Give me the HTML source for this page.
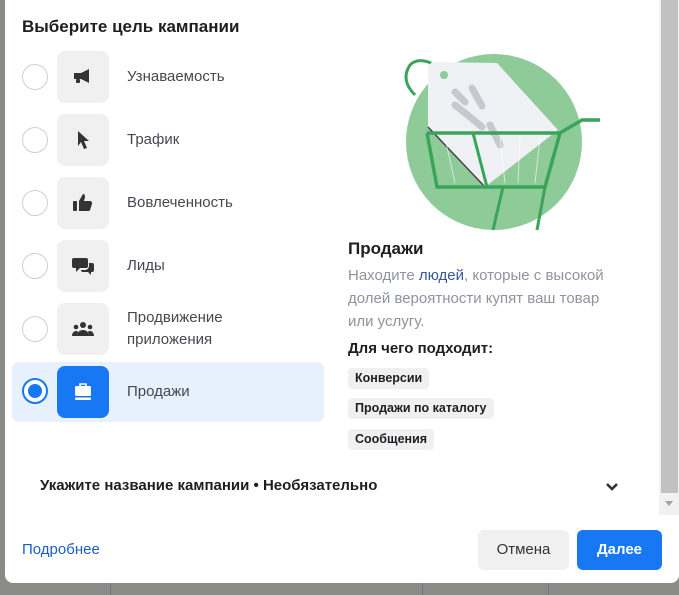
<!DOCTYPE html>
<html><head><meta charset="utf-8"><style>
*{box-sizing:border-box;margin:0;padding:0}
body{width:679px;height:595px;overflow:hidden;background:#8a8a87;font-family:"Liberation Sans",Arial,sans-serif;position:relative}
.modal{position:absolute;left:5px;top:-10px;width:674px;height:593px;background:#fff;border-radius:8px;overflow:hidden}
.abs{position:absolute}
h1{position:absolute;left:17px;top:17px;font-size:17px;font-weight:bold;color:#1c1e21}
.radio{position:absolute;left:17px;width:26px;height:26px;border:1px solid #ccd0d5;border-radius:50%;background:#fff}
.ic{position:absolute;left:52px;width:52px;height:52px;border-radius:8px;background:#f0f0f0;display:flex;align-items:center;justify-content:center}
.lb{position:absolute;left:122px;font-size:15px;color:#444950;line-height:22px}
.tag{position:absolute;left:343px;background:#f0f0f0;border-radius:4px;font-size:12.5px;font-weight:bold;color:#1c1e21;padding:3px 7px;line-height:15px}
.sb{position:absolute;left:654px;top:10px;width:20px;height:515px;background:#f1f1f1}
</style></head><body>
<div class="abs" style="left:110px;top:583px;width:1px;height:12px;background:#777"></div>
<div class="abs" style="left:422px;top:583px;width:1px;height:12px;background:#777"></div>
<div class="abs" style="left:548px;top:583px;width:1px;height:12px;background:#777"></div>
<div class="modal">
<div style="position:absolute;left:0;top:10px;width:674px;height:593px">
<h1>Выберите цель кампании</h1>
<div class="abs" style="left:7px;top:362px;width:312px;height:60px;background:#e7f0fd;border-radius:6px"></div>

<div class="radio" style="top:64px"></div>
<div class="ic" style="top:51px"><svg width="24" height="20" viewBox="0 0 24 20"><path d="M3 6h7l8-4v14l-8-4H3z" fill="#333"/><rect x="5" y="12" width="4" height="4" rx="1" fill="#333"/></svg></div>
<div class="lb" style="top:66px">Узнаваемость</div>

<div class="radio" style="top:127px"></div>
<div class="ic" style="top:114px"><svg width="18" height="22" viewBox="0 0 18 22"><path d="M4 2l11 10h-5l3 7-3 1-3-7-3 4z" fill="#333"/></svg></div>
<div class="lb" style="top:129px">Трафик</div>

<div class="radio" style="top:190px"></div>
<div class="ic" style="top:177px"><svg width="24" height="22" viewBox="0 0 24 22"><rect x="2" y="9" width="4" height="10" rx="1" fill="#333"/><path d="M8 9l4-7c2 0 2 2 2 3l-1 4h6c1.5 0 2.5 1.5 2 3l-2 6c-.4 1-1 1-2 1H8z" fill="#333"/></svg></div>
<div class="lb" style="top:192px">Вовлеченность</div>

<div class="radio" style="top:253px"></div>
<div class="ic" style="top:240px"><svg width="24" height="22" viewBox="0 0 24 22"><path d="M3 3h12a2 2 0 012 2v6a2 2 0 01-2 2H9l-4 4v-4H3a2 2 0 01-2-2V5a2 2 0 012-2z" fill="#333"/><path d="M18 8h3a2 2 0 012 2v5a2 2 0 01-2 2h-1v3l-3-3h-5a2 2 0 01-2-2h4a4 4 0 004-4z" fill="#333"/></svg></div>
<div class="lb" style="top:255px">Лиды</div>

<div class="radio" style="top:316px"></div>
<div class="ic" style="top:303px"><svg width="24" height="18" viewBox="0 0 24 18"><circle cx="12" cy="5" r="3" fill="#333"/><circle cx="5" cy="7" r="2.3" fill="#333"/><circle cx="19" cy="7" r="2.3" fill="#333"/><path d="M6 16c0-4 3-6 6-6s6 2 6 6z" fill="#333"/><path d="M1 16c0-3 2-5 4-5s2 1 2 1-1 2-1 4z M23 16c0-3-2-5-4-5s-2 1-2 1 1 2 1 4z" fill="#333"/></svg></div>
<div class="lb" style="top:307px">Продвижение<br>приложения</div>

<div class="radio" style="top:378px;border:2px solid #1877f2"><div style="position:absolute;left:4px;top:4px;width:14px;height:14px;border-radius:50%;background:#1877f2"></div></div>
<div class="ic" style="top:366px;background:#1877f2"><svg width="20" height="20" viewBox="0 0 20 20"><path d="M7 4V2h6v2" stroke="#fff" stroke-width="1.6" fill="none"/><rect x="2" y="4" width="16" height="10" rx="1.5" fill="#fff"/><rect x="2" y="15.5" width="16" height="2.5" rx="1" fill="#fff"/></svg></div>
<div class="lb" style="top:381px">Продажи</div>

<svg class="abs" style="left:-5px;top:0" width="679" height="240" viewBox="0 0 679 240">
<circle cx="494" cy="142" r="88" fill="#8fca99"/>
<path d="M440 68 Q420 55 410 65 Q400 80 415 95" stroke="#3aa55a" stroke-width="3" fill="none"/>
<path d="M432 62 L497 63 L558 130 L485 187 L428 127 L428 66 Z" fill="#f0f1f4"/>
<path d="M428 127 L485 187" stroke="#444" stroke-width="1.5"/>
<circle cx="444" cy="75" r="4" fill="#8fca99"/>
<path d="M455 92 l10 10 M472 88 l10 18 M470 117 l12 10 M490 125 l10 20 M455 105 l20 16" stroke="#c5c9d0" stroke-width="7" stroke-linecap="round"/>
<path d="M427 133 L560 133 L582 120 L600 120 M427 133 L437 187 L545 187 L560 133" stroke="#3aa55a" stroke-width="3.5" fill="none"/>
<path d="M473 133 L487 187 M503 187 L493 230 M545 187 L537 230" stroke="#3aa55a" stroke-width="3" fill="none"/>
<path d="M445 138 L455 183 M500 138 L505 183 M520 138 L518 183 M540 138 L535 183" stroke="#fff" stroke-width="1" opacity=".6"/>
</svg>

<div class="abs" style="left:343px;top:239px;font-size:17px;font-weight:bold;color:#1c1e21">Продажи</div>
<div class="abs" style="left:343px;top:264px;font-size:15px;line-height:23px;color:#8d949e;width:275px">Находите <span style="color:#385898">людей</span>, которые с высокой долей вероятности купят ваш товар или услугу.</div>
<div class="abs" style="left:343px;top:340px;font-size:15px;font-weight:bold;color:#1c1e21">Для чего подходит:</div>
<div class="tag" style="top:368px">Конверсии</div>
<div class="tag" style="top:398px">Продажи по каталогу</div>
<div class="tag" style="top:429px">Сообщения</div>

<div class="abs" style="left:35px;top:477px;font-size:15px;font-weight:bold;color:#1c1e21">Укажите название кампании • Необязательно</div>
<svg class="abs" style="left:599px;top:481px" width="16" height="12" viewBox="0 0 16 12"><path d="M3 3l5 5 5-5" stroke="#333" stroke-width="2.6" fill="none"/></svg>

<div class="sb" style="top:0"><div style="position:absolute;left:2px;top:0;width:17px;height:493px;background:#c1c1c1"></div><svg style="position:absolute;left:5px;top:499px" width="10" height="8"><path d="M1 2h8l-4 5z" fill="#a3a3a3"/></svg></div>

<div class="abs" style="left:17px;top:541px;font-size:15px;color:#1a5ec5">Подробнее</div>
<div class="abs" style="left:473px;top:530px;width:91px;height:40px;background:#f0f0f0;border-radius:6px;font-size:15px;color:#333;text-align:center;line-height:40px">Отмена</div>
<div class="abs" style="left:572px;top:530px;width:85px;height:40px;background:#1877f2;border-radius:6px;font-size:15px;font-weight:bold;color:#fff;text-align:center;line-height:40px">Далее</div>
</div>
</div>
</body></html>
